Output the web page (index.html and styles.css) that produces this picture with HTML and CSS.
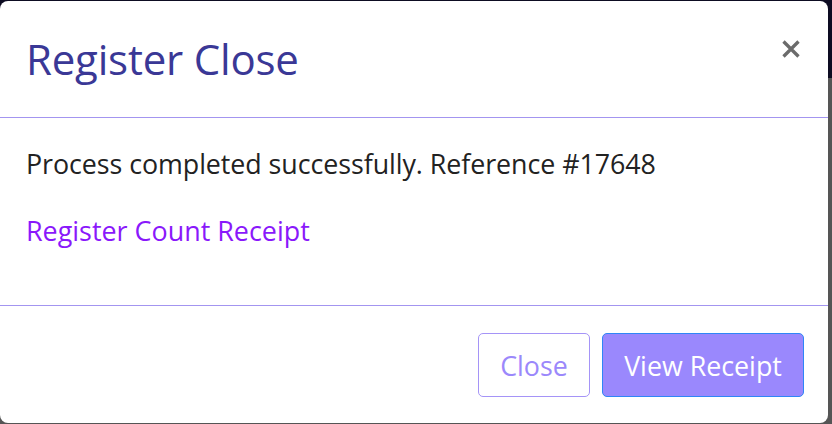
FILE: index.html
```html
<!DOCTYPE html>
<html lang="en">
<head>
<meta charset="utf-8">
<title>Register Close</title>
<link rel="stylesheet" href="styles.css">
</head>
<body>
<div class="backdrop">
  <div class="modal">
    <div class="modal-header">
      <h1 class="modal-title">Register Close</h1>
      <button class="btn-x" aria-label="Close">
        <svg width="20" height="20" viewBox="0 0 20 20"><path d="M2.5 2.5 L17.5 17.5 M17.5 2.5 L2.5 17.5" stroke="#6b6b6b" stroke-width="3.3" stroke-linecap="butt"/></svg>
      </button>
    </div>
    <div class="modal-body">
      <p class="msg">Process completed successfully. Reference #17648</p>
      <a class="link" href="#">Register Count Receipt</a>
    </div>
    <div class="modal-footer">
      <button class="btn btn-outline">Close</button>
      <button class="btn btn-primary">View Receipt</button>
    </div>
  </div>
</div>
</body>
</html>
```
FILE: styles.css
```css
* { box-sizing: border-box; }
html, body { margin: 0; padding: 0; }
body {
  width: 832px;
  height: 424px;
  overflow: hidden;
  background: linear-gradient(to bottom, #0d0c22 0, #0d0c22 78px, #555555 78px, #555555 100%);
  font-family: "Open Sans", "Noto Sans", sans-serif;
}
.backdrop {
  padding-top: 1px;
  width: 828px;
}
.modal {
  background: #fff;
  border-radius: 8px;
  height: 422px;
  display: flex;
  flex-direction: column;
}
.modal-header {
  height: 117px;
  display: flex;
  align-items: center;
  justify-content: space-between;
  padding: 0 27px 0 26px;
  border-bottom: 1px solid #a395f0;
}
.modal-title {
  margin: 0;
  font-weight: 400;
  font-size: 42px;
  line-height: 50px;
  letter-spacing: -0.2px;
  color: #3a3896;
}
.btn-x {
  background: none;
  border: 0;
  padding: 0;
  width: 20px;
  height: 20px;
  display: flex;
  margin-top: -21px;
}
.modal-body {
  height: 187px;
  padding: 28px 26px 0 26px;
}
.msg {
  margin: 0;
  font-size: 26.8px;
  line-height: 36px;
  letter-spacing: -0.05px;
  color: #222;
}
.link {
  display: inline-block;
  margin-top: 31px;
  font-size: 26.9px;
  line-height: 36px;
  color: #8a18fb;
  text-decoration: none;
}
.modal-footer {
  flex: 1;
  border-top: 1px solid #a395f0;
  display: flex;
  justify-content: flex-end;
  align-items: flex-start;
  gap: 12px;
  padding: 27px 24px 0 0;
}
.btn {
  height: 64px;
  font-family: "Open Sans", "Noto Sans", sans-serif;
  font-size: 26.8px;
  border-radius: 5px;
  padding: 0;
}
.btn-outline {
  width: 112px;
  background: #fff;
  color: #9b88fb;
  border: 1px solid #a594f7;
}
.btn-primary {
  width: 202px;
  background: #9a88fd;
  color: #fff;
  border: 1px solid #2f86f6;
}
```
